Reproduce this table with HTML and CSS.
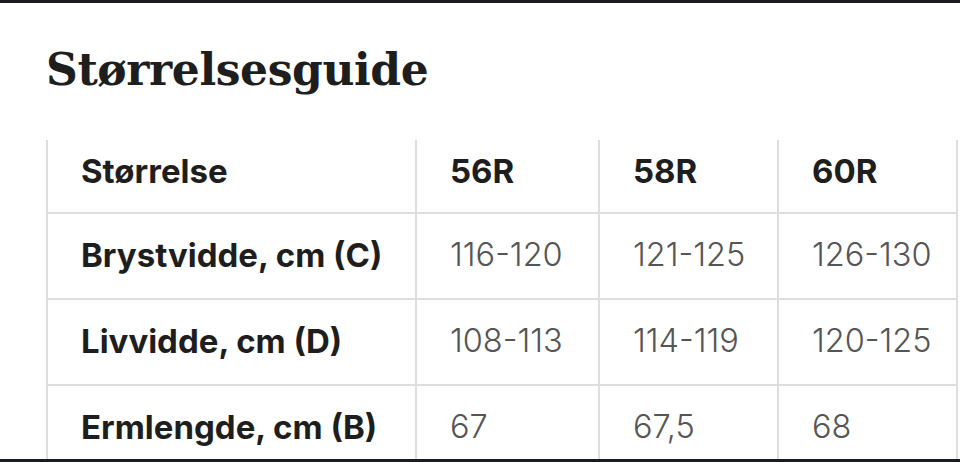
FILE: index.html
```html
<!DOCTYPE html>
<html lang="no">
<head>
<meta charset="utf-8">
<link rel="stylesheet" href="styles.css">
</head>
<body>
<div class="frame">
  <h1 class="title">Størrelsesguide</h1>
  <table class="guide">
    <colgroup>
      <col class="c-label"><col class="c-a"><col class="c-b"><col class="c-c">
    </colgroup>
    <thead>
      <tr class="head-row"><th>Størrelse</th><th>56R</th><th>58R</th><th>60R</th></tr>
    </thead>
    <tbody>
      <tr class="body-row"><th>Brystvidde, cm (C)</th><td>116-120</td><td>121-125</td><td>126-130</td></tr>
      <tr class="body-row"><th>Livvidde, cm (D)</th><td>108-113</td><td>114-119</td><td>120-125</td></tr>
      <tr class="body-row"><th>Ermlengde, cm (B)</th><td>67</td><td>67,5</td><td>68</td></tr>
    </tbody>
  </table>
</div>
</body>
</html>
```

FILE: styles.css
```css
html, body {
  margin: 0;
  padding: 0;
  background: #fff;
}
.frame {
  box-sizing: border-box;
  width: 960px;
  height: 462px;
  overflow: hidden;
  border-top: 3px solid #1b1b22;
  border-bottom: 3px solid #1b1b22;
  padding-left: 46px;
}
.title {
  margin: 0;
  padding-top: 41px;
  height: 137px;
  box-sizing: border-box;
  font-family: "DejaVu Serif", serif;
  font-weight: 700;
  font-size: 44px;
  line-height: 52px;
  letter-spacing: -0.4px;
  color: #1e1e1e;
}
.guide {
  border-collapse: collapse;
  table-layout: fixed;
  width: 910px;
  font-family: Inter, "Noto Sans", sans-serif;
}
.c-label { width: 369px; }
.c-a { width: 183px; }
.c-b { width: 179px; }
.c-c { width: 179px; }
.guide th, .guide td {
  border: 2px solid #dedede;
  padding: 0 0 3px 33px;
  text-align: left;
  vertical-align: middle;
  white-space: nowrap;
}
.head-row { height: 73px; }
.body-row { height: 86px; }
.guide thead th {
  border-top: none;
  padding-bottom: 11px;
  font-size: 33px;
  font-weight: 700;
  color: #1e1e1e;
}
.guide tbody th {
  font-size: 33px;
  font-weight: 700;
  color: #1e1e1e;
}
.guide tbody td {
  font-size: 32.5px;
  font-weight: 300;
  color: #555;
}
```
